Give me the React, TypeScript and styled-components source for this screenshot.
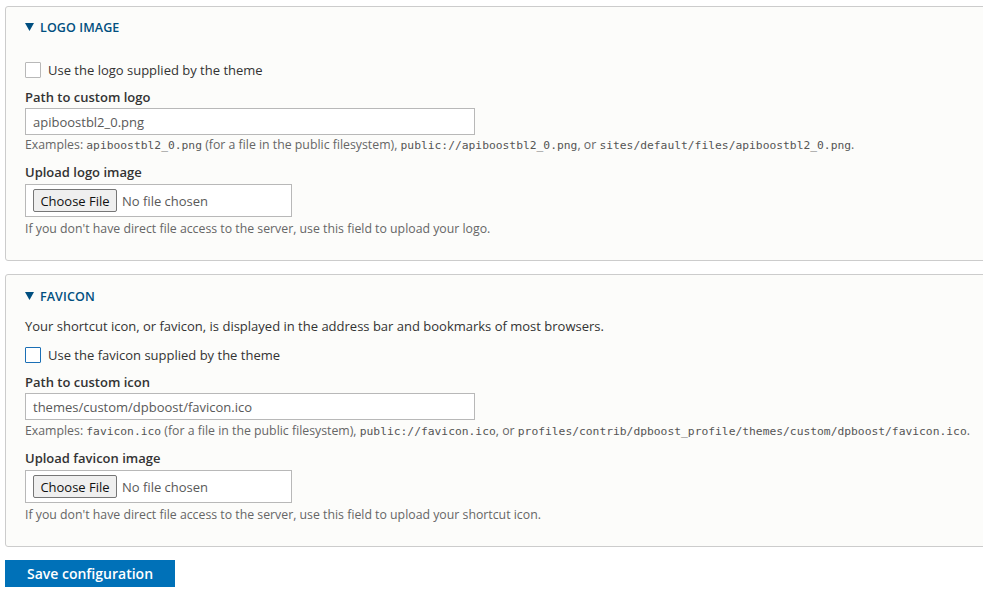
import React from "react";
import styled, { createGlobalStyle } from "styled-components";

const Global = createGlobalStyle`
  html, body { margin: 0; padding: 0; background: #ffffff; }
  body { font-family: "Open Sans", "Noto Sans", sans-serif; color: #333333; overflow: hidden; }
`;

const Page = styled.div`
  padding: 6px 0 0 5px;
  display: flex;
  flex-direction: column;
  align-items: flex-start;
`;

const Panel = styled.section<{ $mt?: number; $pt: number }>`
  align-self: stretch;
  margin-right: -12px;
  margin-top: ${(p) => p.$mt ?? 0}px;
  border: 1px solid #cccccc;
  border-radius: 3px;
  background: #fcfcfa;
  padding: ${(p) => p.$pt}px 19px 23px 19px;
  display: flex;
  flex-direction: column;
  align-items: flex-start;
`;

const Summary = styled.div`
  display: flex;
  align-items: center;
  gap: 6px;
  height: 20px;
  color: #004f80;
  font-size: 12.5px;
  font-weight: 600;
  text-transform: uppercase;
  letter-spacing: 0.1px;
`;

const Triangle = styled.svg`
  width: 9px;
  height: 8px;
  flex: none;
`;

const Para = styled.div<{ $mt: number }>`
  margin-top: ${(p) => p.$mt}px;
  font-size: 13px;
  line-height: 20px;
  color: #333333;
`;

const CheckRow = styled.label<{ $mt: number }>`
  margin-top: ${(p) => p.$mt}px;
  display: flex;
  align-items: center;
  gap: 7px;
  height: 20px;
  font-size: 13px;
  color: #333333;
`;

const Box = styled.span<{ $focus?: boolean }>`
  width: 14px;
  height: 14px;
  flex: none;
  background: #ffffff;
  border: 1px solid ${(p) => (p.$focus ? "#1b6fb5" : "#b8b8b8")};
  border-radius: 1px;
`;

const Label = styled.div<{ $mt: number }>`
  margin-top: ${(p) => p.$mt}px;
  font-size: 13px;
  line-height: 18px;
  font-weight: 600;
  color: #333333;
`;

const TextInput = styled.div`
  margin-top: 2px;
  width: 450px;
  height: 27px;
  box-sizing: border-box;
  border: 1px solid #b8b8b8;
  background: #ffffff;
  display: flex;
  align-items: center;
  padding-left: 7px;
  font-size: 13px;
  color: #595959;
`;

const Desc = styled.div<{ $mt: number }>`
  margin-top: ${(p) => p.$mt}px;
  height: 16px;
  font-size: 12.3px;
  line-height: 16px;
  color: #666666;
  white-space: nowrap;
`;

const Code = styled.code`
  font-family: "DejaVu Sans Mono", "Liberation Mono", monospace;
  font-size: 11.3px;
  line-height: 1;
  color: #555555;
`;

const FileBox = styled.div`
  margin-top: 3px;
  width: 267px;
  height: 33px;
  box-sizing: border-box;
  border: 1px solid #b8b8b8;
  background: #ffffff;
  display: flex;
  align-items: center;
  padding-left: 7px;
  gap: 5px;
  font-size: 13px;
  color: #595959;
`;

const ChooseButton = styled.span`
  height: 23px;
  width: 84px;
  box-sizing: border-box;
  border: 1px solid #767676;
  border-radius: 2px;
  background: #efefef;
  color: #111111;
  display: flex;
  align-items: center;
  justify-content: center;
  font-size: 13px;
`;

const SaveButton = styled.button`
  margin-top: 13px;
  width: 170px;
  height: 27px;
  border: none;
  background: #0071b8;
  color: #ffffff;
  font-family: "Open Sans", "Noto Sans", sans-serif;
  font-size: 14px;
  font-weight: 600;
  padding: 0;
  cursor: pointer;
`;

const Arrow = () => (
  <Triangle viewBox="0 0 9 8">
    <path d="M0 0 H9 L4.5 8 Z" fill="#004f80" />
  </Triangle>
);

const FileInput = () => (
  <FileBox>
    <ChooseButton>Choose File</ChooseButton>
    <span>No file chosen</span>
  </FileBox>
);

export default function App() {
  return (
    <>
      <Global />
      <Page>
        <Panel $pt={10}>
          <Summary>
            <Arrow />
            Logo image
          </Summary>
          <CheckRow $mt={23}>
            <Box />
            Use the logo supplied by the theme
          </CheckRow>
          <Label $mt={8}>Path to custom logo</Label>
          <TextInput>apiboostbl2_0.png</TextInput>
          <Desc $mt={2}>
            Examples: <Code>apiboostbl2_0.png</Code> (for a file in the public filesystem),{" "}
            <Code>public://apiboostbl2_0.png</Code>, or{" "}
            <Code>sites/default/files/apiboostbl2_0.png</Code>.
          </Desc>
          <Label $mt={10}>Upload logo image</Label>
          <FileInput />
          <Desc $mt={4}>
            If you don't have direct file access to the server, use this field to upload your logo.
          </Desc>
        </Panel>
        <Panel $mt={13} $pt={11}>
          <Summary>
            <Arrow />
            Favicon
          </Summary>
          <Para $mt={10}>
            Your shortcut icon, or favicon, is displayed in the address bar and bookmarks of most browsers.
          </Para>
          <CheckRow $mt={9}>
            <Box $focus />
            Use the favicon supplied by the theme
          </CheckRow>
          <Label $mt={8}>Path to custom icon</Label>
          <TextInput>themes/custom/dpboost/favicon.ico</TextInput>
          <Desc $mt={3}>
            Examples: <Code>favicon.ico</Code> (for a file in the public filesystem),{" "}
            <Code>public://favicon.ico</Code>, or{" "}
            <Code>profiles/contrib/dpboost_profile/themes/custom/dpboost/favicon.ico</Code>.
          </Desc>
          <Label $mt={10}>Upload favicon image</Label>
          <FileInput />
          <Desc $mt={4}>
            If you don't have direct file access to the server, use this field to upload your shortcut icon.
          </Desc>
        </Panel>
        <SaveButton>Save configuration</SaveButton>
      </Page>
    </>
  );
}
